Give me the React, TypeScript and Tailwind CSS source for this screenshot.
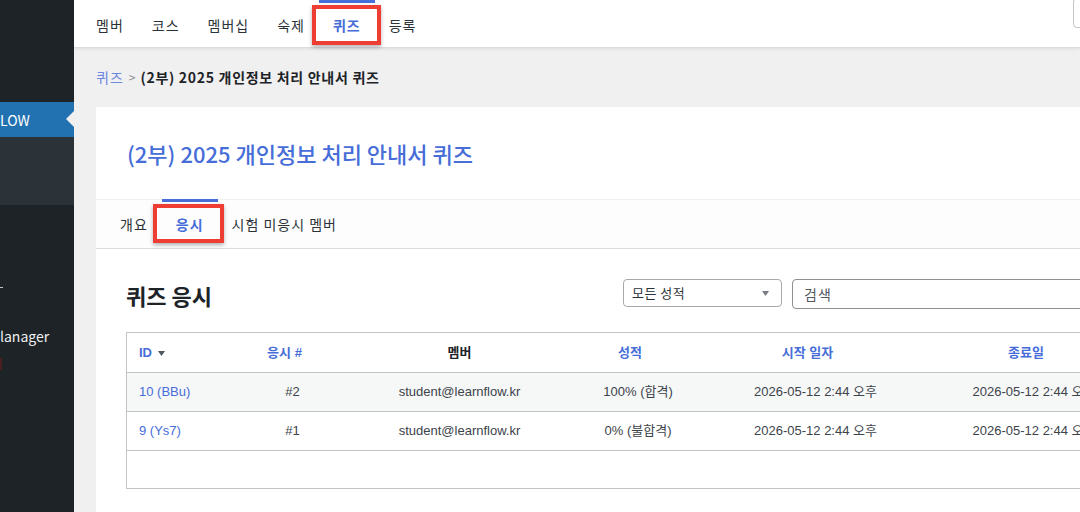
import React from "react";

const BLUE = "text-[#466dd8]";

function Tri({ className = "" }: { className?: string }) {
  return (
    <svg width="7" height="5" viewBox="0 0 7 5" className={className}>
      <path d="M0 0 H7 L3.5 5 Z" fill="currentColor" />
    </svg>
  );
}

export default function App() {
  const cols = "grid grid-cols-[100px_131px_203px_154px_201px_236px]";
  const rows = [
    { id: "10 (BBu)", n: "#2", m: "student@learnflow.kr", g: "100% (합격)", s: "2026-05-12 2:44 오후", e: "2026-05-12 2:44 오후", bg: "bg-[#f6f7f7]" },
    { id: "9 (Ys7)", n: "#1", m: "student@learnflow.kr", g: "0% (불합격)", s: "2026-05-12 2:44 오후", e: "2026-05-12 2:44 오후", bg: "bg-white" },
  ];
  return (
    <div className="w-[1080px] h-[512px] overflow-hidden flex bg-[#f0f0f1] [font-family:'Noto_Sans_CJK_KR','Noto_Sans',sans-serif] text-[#1d2327]">
      {/* Sidebar */}
      <aside className="w-[74px] shrink-0 bg-[#1d2327] flex flex-col">
        <div className="h-[102px]" />
        <div className="h-[35px] bg-[#2271b1] relative flex items-center">
          <span className="text-white text-[14px] leading-none">LOW</span>
          <span className="absolute right-0 top-[9px] w-0 h-0 border-y-[8px] border-y-transparent border-r-[8px] border-r-[#f0f0f1]" />
        </div>
        <div className="h-[68px] bg-[#2c3338]" />
        <div className="h-[76px]" />
        <div className="h-[12px] flex items-center">
          <span className="block w-[3px] h-[1px] bg-[#c3c4c7]" />
        </div>
        <div className="h-[33px]" />
        <div className="h-[20px] flex items-center text-[14px] text-[#f0f0f1] leading-none">lanager</div>
        <div className="h-[11px]" />
        <div className="h-[14px] flex items-center">
          <span className="block w-[2px] h-[12px] bg-[#4a1f22]" />
        </div>
      </aside>

      {/* Main */}
      <main className="flex-1 min-w-0 flex flex-col">
        {/* Top bar */}
        <div className="h-[48px] shrink-0 bg-white border-b border-[#dcdcde] shadow-[0_1px_3px_rgba(0,0,0,0.08)] flex items-stretch pl-[8px] relative z-10">
          {["멤버", "코스", "멤버십", "숙제", "퀴즈", "등록"].map((t) =>
            t === "퀴즈" ? (
              <div key={t} className="relative px-[14px] flex items-center border-t-[3px] border-[#466dd8]">
                <span className={`text-[14px] tracking-[1px] font-bold ${BLUE} relative z-10`}>{t}</span>
                <span className="absolute left-[-7px] right-[-6px] top-[2px] bottom-[2px] border-[4px] border-[#ee3d33] shadow-[0_2px_4px_rgba(0,0,0,0.3)]" />
              </div>
            ) : (
              <div key={t} className="px-[14px] pt-[3px] flex items-center">
                <span className="text-[14px] tracking-[1px] text-[#2c3338]">{t}</span>
              </div>
            )
          )}
          <div className="flex-1" />
          <div className="shrink-0 w-[100px] h-[30px] mt-[-2px] mr-[-93px] border border-[#c3c4c7] rounded-[4px]" />
        </div>

        {/* Content */}
        <div className="flex-1 flex flex-col pl-[22px]">
          <div className="h-[59px] flex items-center text-[14px] leading-none pb-[2px]">
            <span className="text-[#6d86e0] tracking-[1px]">퀴즈</span>
            <span className="text-[#8c8f94] mx-[5px] text-[12px]">&gt;</span>
            <span className="font-bold text-[#1d2327] tracking-[0.7px]">(2부) 2025 개인정보 처리 안내서 퀴즈</span>
          </div>

          <div className="w-[1100px] bg-white flex flex-col flex-1">
            <div className="h-[92px] flex items-center pl-[31px]">
              <h1 className={`text-[22px] font-medium ${BLUE} leading-none`}>(2부) 2025 개인정보 처리 안내서 퀴즈</h1>
            </div>
            <div className="h-[50px] bg-[#fdfdfd] border-t border-[#f0f0f1] border-b border-b-[#dcdcde] flex items-stretch pl-[10px]">
              <div className="px-[14px] flex items-center text-[14px] tracking-[1px] text-[#2c3338]">개요</div>
              <div className="relative px-[14px] flex items-center border-t-[3px] border-[#466dd8] mt-[-1px]">
                <span className={`text-[14px] tracking-[1px] font-bold ${BLUE} relative z-10 mt-[-2px]`}>응시</span>
                <span className="absolute left-[-9px] right-[-6px] top-[2px] bottom-[5px] border-[4px] border-[#ee3d33] shadow-[0_2px_4px_rgba(0,0,0,0.3)]" />
              </div>
              <div className="px-[14px] flex items-center text-[14px] tracking-[1px] text-[#2c3338]">시험 미응시 멤버</div>
            </div>

            <div className="pl-[30px] pt-[30px] flex flex-col">
              <div className="flex items-center h-[30px]">
                <h2 className="w-[497px] shrink-0 text-[22px] font-bold text-[#1d2327] leading-none mt-[2px]">퀴즈 응시</h2>
                <div className="w-[159px] h-[28px] shrink-0 border border-[#a7aaad] rounded-[4px] flex items-center justify-between pl-[8px] pr-[12px] mt-[-2px]">
                  <span className="text-[13px] tracking-[0.5px] text-[#2c3338]">모든 성적</span>
                  <Tri className="text-[#787c82]" />
                </div>
                <div className="w-[320px] h-[30px] shrink-0 ml-[10px] border border-[#8c8f94] rounded-[4px] flex items-center pl-[11px]">
                  <span className="text-[14px] tracking-[1px] text-[#50575e]">검색</span>
                </div>
              </div>

              <div className="mt-[23px] w-[1100px] border border-[#c3c4c7] [font-family:'Liberation_Sans','Noto_Sans_CJK_KR',sans-serif]">
                <div className={`${cols} h-[39px] items-center text-[13px] font-bold`}>
                  <div className={`pl-[12px] flex items-center gap-[6px] ${BLUE}`}>
                    ID <Tri className="text-[#50575e] mt-[1px]" />
                  </div>
                  <div className={`text-center pr-[16px] ${BLUE}`}>응시 #</div>
                  <div className="text-center text-[#1d2327]">멤버</div>
                  <div className={`text-center pr-[16px] ${BLUE}`}>성적</div>
                  <div className={`text-center pr-[16px] ${BLUE}`}>시작 일자</div>
                  <div className={`text-center pr-[16px] ${BLUE}`}>종료일</div>
                </div>
                {rows.map((r) => (
                  <div key={r.id} className={`${cols} h-[39px] items-center text-[13px] text-[#3c434a] border-t border-[#c3c4c7] ${r.bg}`}>
                    <div className={`pl-[12px] ${BLUE}`}>{r.id}</div>
                    <div className="text-center">{r.n}</div>
                    <div className="text-center">{r.m}</div>
                    <div className="text-center">{r.g}</div>
                    <div className="text-center">{r.s}</div>
                    <div className="text-center">{r.e}</div>
                  </div>
                ))}
                <div className="h-[38px] border-t border-[#c3c4c7]" />
              </div>
            </div>
          </div>
        </div>
      </main>
    </div>
  );
}
